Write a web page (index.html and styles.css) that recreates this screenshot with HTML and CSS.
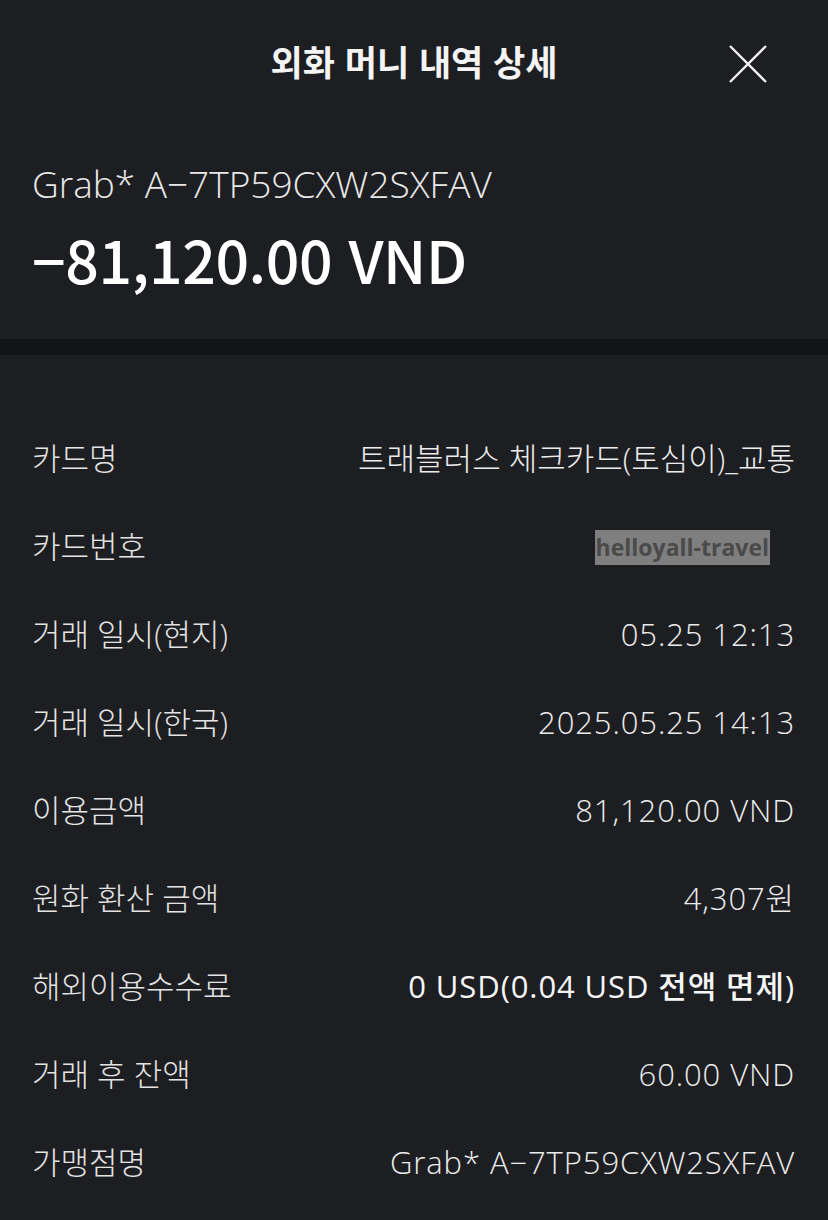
FILE: index.html
```html
<!DOCTYPE html>
<html lang="ko">
<head>
<meta charset="utf-8">
<link rel="stylesheet" href="styles.css">
</head>
<body>
<div class="page">
  <header class="topbar">
    <h1 class="title">외화 머니 내역 상세</h1>
    <button class="close" aria-label="닫기">
      <svg width="40" height="40" viewBox="0 0 40 40"><path d="M2 2 L38 38 M38 2 L2 38" stroke="#f2f2f2" stroke-width="2.4" fill="none"/></svg>
    </button>
  </header>
  <section class="summary">
    <div class="merchant">Grab* A−7TP59CXW2SXFAV</div>
    <div class="amount">−81,120.00 VND</div>
  </section>
  <div class="band"></div>
  <section class="details">
    <div class="row"><span class="label">카드명</span><span class="value">트래블러스 체크카드(토심이)_교통</span></div>
    <div class="row"><span class="label">카드번호</span><span class="value"><span class="mark">helloyall-travel</span></span></div>
    <div class="row"><span class="label">거래 일시(현지)</span><span class="value latin">05.25 12:13</span></div>
    <div class="row"><span class="label">거래 일시(한국)</span><span class="value latin">2025.05.25 14:13</span></div>
    <div class="row"><span class="label">이용금액</span><span class="value latin">81,120.00 VND</span></div>
    <div class="row"><span class="label">원화 환산 금액</span><span class="value latin">4,307원</span></div>
    <div class="row"><span class="label">해외이용수수료</span><span class="value strong">0 USD(0.04 USD 전액 면제)</span></div>
    <div class="row"><span class="label">거래 후 잔액</span><span class="value latin">60.00 VND</span></div>
    <div class="row"><span class="label">가맹점명</span><span class="value latin">Grab* A−7TP59CXW2SXFAV</span></div>
  </section>
</div>
</body>
</html>
```

FILE: styles.css
```css
* { box-sizing: border-box; }
html, body {
  margin: 0;
  padding: 0;
  background: #1d1e22;
}
body {
  font-family: "Open Sans", "Noto Sans CJK KR", sans-serif;
  color: #ececec;
  width: 828px;
  height: 1220px;
  overflow: hidden;
}
.page { display: flex; flex-direction: column; }

.topbar {
  height: 128px;
  display: flex;
  align-items: center;
  justify-content: center;
  position: relative;
}
.title {
  margin: 0;
  font-family: "Noto Sans CJK KR", sans-serif;
  font-size: 35px;
  font-weight: 700;
  color: #f4f4f4;
  letter-spacing: 0;
  line-height: 1;
  transform: translateY(-4px);
}
.close {
  position: absolute;
  right: 60px;
  top: 44px;
  width: 40px;
  height: 40px;
  padding: 0;
  border: 0;
  background: none;
}
.close svg { display: block; }

.summary {
  padding: 26px 32px 0 32px;
  height: 211px;
  display: flex;
  flex-direction: column;
}
.merchant {
  font-size: 37px;
  font-weight: 300;
  line-height: 60px;
  color: #e8e8e8;
}
.amount {
  font-family: "Noto Sans CJK KR", sans-serif;
  font-size: 59px;
  font-weight: 500;
  line-height: 90px;
  color: #ffffff;
  letter-spacing: -0.4px;
}
.band {
  height: 16px;
  background: #131416;
}
.details {
  padding: 60px 33px 0 32px;
  display: flex;
  flex-direction: column;
}
.row {
  height: 87.9px;
  display: flex;
  align-items: center;
  justify-content: space-between;
  font-size: 31px;
  font-weight: 300;
  line-height: 1;
}
.label { color: #e4e4e4; }
.value { color: #ececec; text-align: right; }
.value.latin { letter-spacing: 0.9px; }
.value.strong { font-weight: 500; color: #f6f6f6; letter-spacing: 0.9px; }
.mark {
  display: inline-block;
  background: #7f7f7f;
  color: #4a4a4a;
  font-family: "Open Sans", sans-serif;
  font-weight: 700;
  font-size: 23px;
  line-height: 35px;
  padding: 0 1px;
  margin-right: 25px;
  letter-spacing: 0;
}
```
